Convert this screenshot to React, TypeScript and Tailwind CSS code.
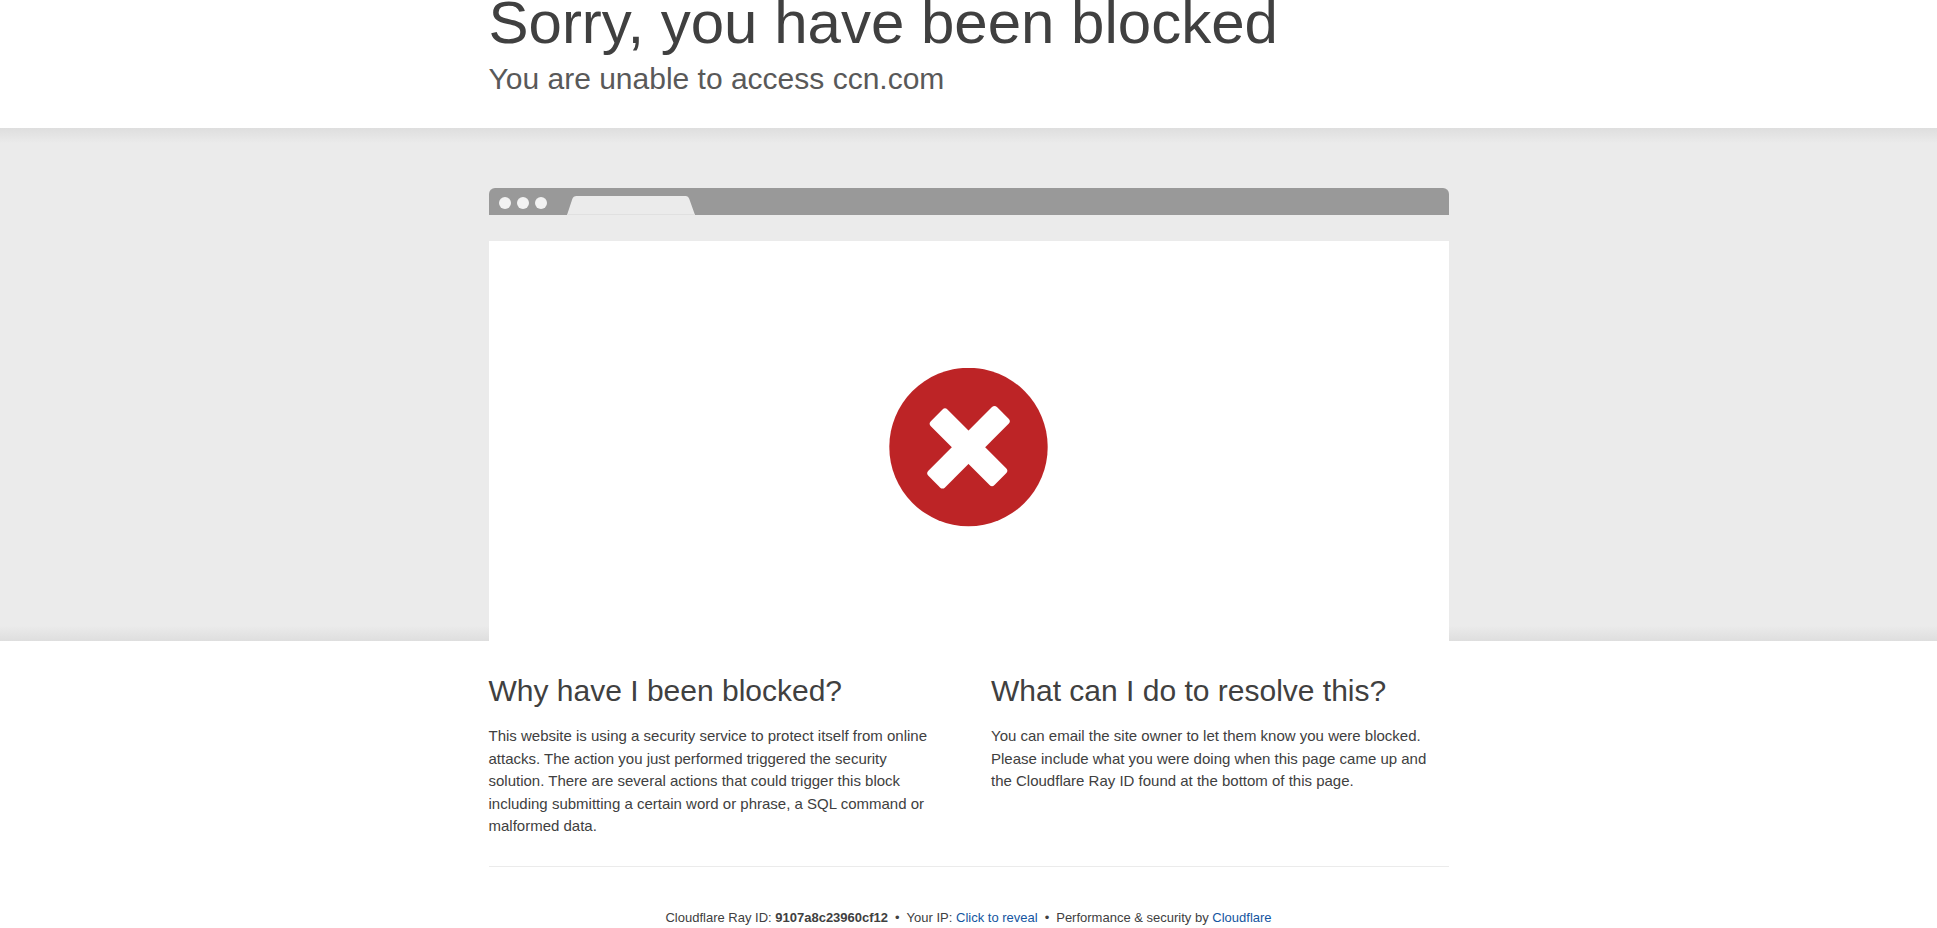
import { useState } from 'react';

const sections = [
  {
    title: 'Why have I been blocked?',
    text: 'This website is using a security service to protect itself from online attacks. The action you just performed triggered the security solution. There are several actions that could trigger this block including submitting a certain word or phrase, a SQL command or malformed data.',
  },
  {
    title: 'What can I do to resolve this?',
    text: 'You can email the site owner to let them know you were blocked. Please include what you were doing when this page came up and the Cloudflare Ray ID found at the bottom of this page.',
  },
];

function BlockedIcon() {
  return (
    <svg className="h-40 w-40" viewBox="0 0 160 160" aria-hidden="true">
      <circle cx="79.5" cy="79" r="79.2" fill="#bd2426" />
      <g fill="#fff">
        <rect x="31" y="67.5" width="97" height="23.5" rx="3.5" transform="rotate(-45 79.5 79.25)" />
        <rect x="34.5" y="67.5" width="90" height="23.5" rx="3.5" transform="rotate(45 79.5 79.25)" />
      </g>
    </svg>
  );
}

function BrowserBar() {
  return (
    <div className="flex h-[27px] items-end overflow-hidden rounded-t-md bg-[#999]">
      <div className="flex gap-[6px] pb-[6px] pl-[10px]">
        <span className="h-3 w-3 rounded-full bg-[#f2f2f2]" />
        <span className="h-3 w-3 rounded-full bg-[#f2f2f2]" />
        <span className="h-3 w-3 rounded-full bg-[#f2f2f2]" />
      </div>
      <svg className="ml-5 h-[19px] w-[128px]" viewBox="0 0 128 19" aria-hidden="true">
        <path d="M0 19L5.3 3Q6.3 0 9.5 0H118.5Q121.3 0 122.3 3L128 19Z" fill="#ebebeb" />
        <path d="M0 18.5H128" stroke="#e0e0e0" />
      </svg>
    </div>
  );
}

export default function App() {
  const [showIp, setShowIp] = useState(false);

  return (
    <div className="bg-white font-['Liberation_Sans',Arial,sans-serif] text-[15px] leading-normal text-[#404040]">
      <header className="mx-auto max-w-[960px] pb-[30px]">
        <h1 className="text-[60px] leading-[46px]">Sorry, you have been blocked</h1>
        <h2 className="mt-[13px] text-[30px] leading-[39px] text-[#595959]">You are unable to access ccn.com</h2>
      </header>

      <section className="bg-[linear-gradient(#dedede,#ebebeb_3%,#ebebeb_97%,#dedede)] pt-[60px]">
        <div className="mx-auto max-w-[960px]">
          <BrowserBar />
          <div className="mt-[26px] flex h-[400px] justify-center bg-white pt-[127px]">
            <BlockedIcon />
          </div>
        </div>
      </section>

      <main className="mx-auto grid max-w-[960px] gap-[45px] pt-[30px] md:grid-cols-2">
        {sections.map((section) => (
          <div key={section.title}>
            <h2 className="mb-[15px] text-[30px] leading-[39px]">{section.title}</h2>
            <p>{section.text}</p>
          </div>
        ))}
      </main>

      <footer className="mx-auto mt-[28px] max-w-[960px] border-t border-[#ebebeb] pt-[41px] text-center text-[13px] leading-5">
        <p className="flex flex-wrap justify-center gap-[7px]">
          <span>
            Cloudflare Ray ID: <strong>9107a8c23960cf12</strong>
          </span>
          <span>•</span>
          <span>
            Your IP:{' '}
            {showIp ? (
              <span>127.0.0.1</span>
            ) : (
              <button type="button" className="cursor-pointer text-[#1455a0]" onClick={() => setShowIp(true)}>
                Click to reveal
              </button>
            )}
          </span>
          <span>•</span>
          <span>
            Performance &amp; security by{' '}
            <a href="https://www.cloudflare.com/5xx-error-landing" className="text-[#1455a0]">
              Cloudflare
            </a>
          </span>
        </p>
      </footer>
    </div>
  );
}
